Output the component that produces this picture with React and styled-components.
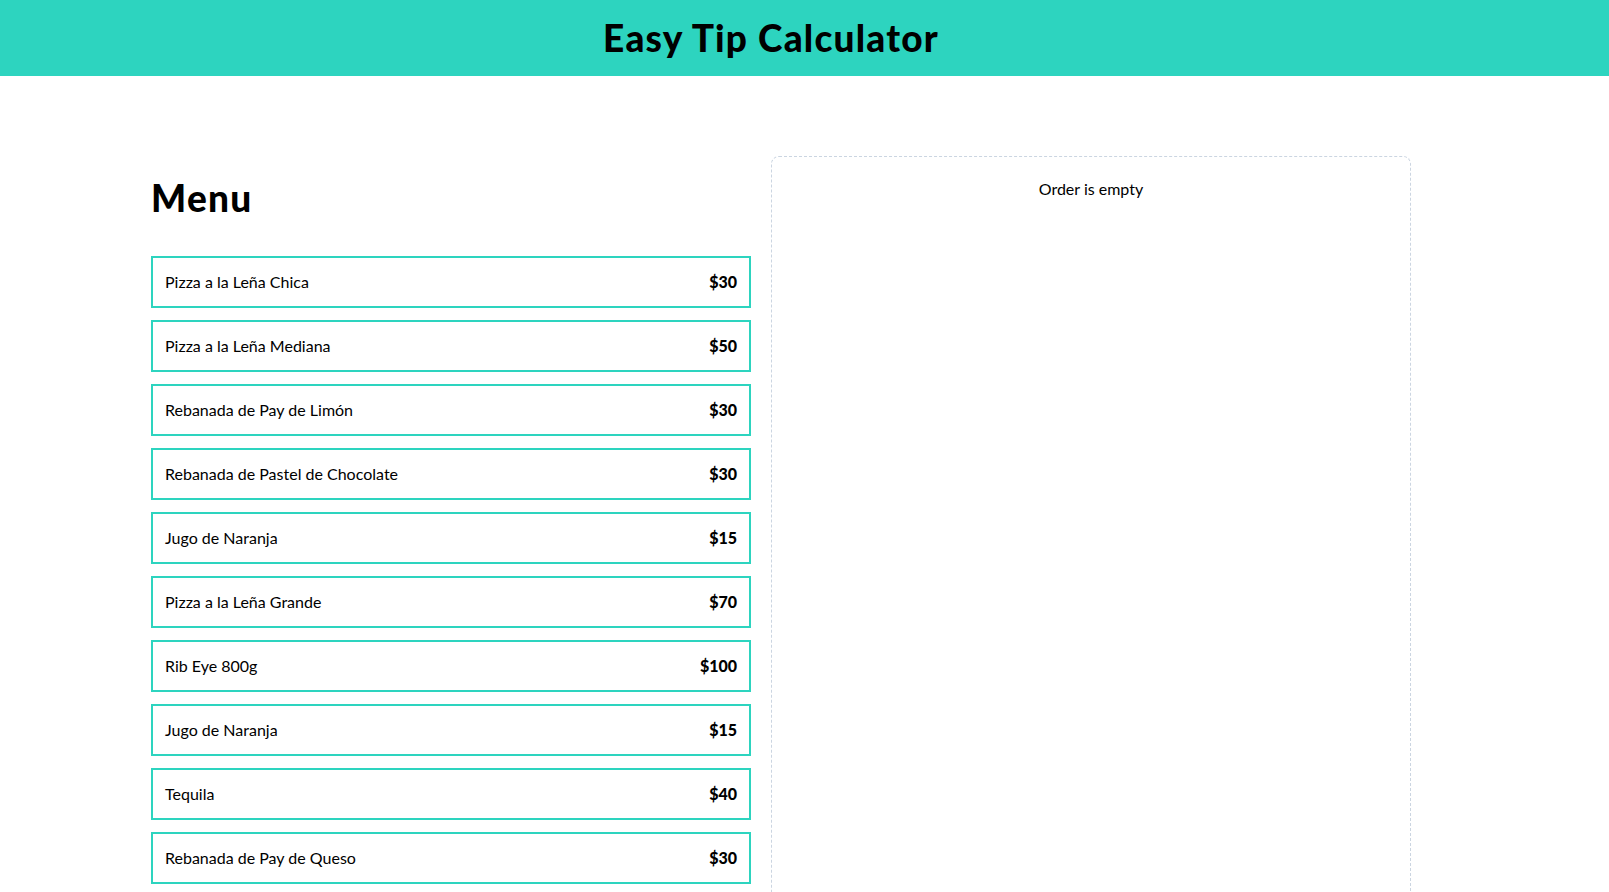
import React from "react";
import styled, { createGlobalStyle } from "styled-components";

const menu = [
  { id: 1, name: "Pizza a la Leña Chica", price: 30 },
  { id: 2, name: "Pizza a la Leña Mediana", price: 50 },
  { id: 3, name: "Rebanada de Pay de Limón", price: 30 },
  { id: 4, name: "Rebanada de Pastel de Chocolate", price: 30 },
  { id: 5, name: "Jugo de Naranja", price: 15 },
  { id: 6, name: "Pizza a la Leña Grande", price: 70 },
  { id: 7, name: "Rib Eye 800g", price: 100 },
  { id: 8, name: "Jugo de Naranja", price: 15 },
  { id: 9, name: "Tequila", price: 40 },
  { id: 10, name: "Rebanada de Pay de Queso", price: 30 },
];

const App = () => {
  return (
    <>
      <GlobalStyle />
      <Header>
        <HeaderInner>
          <Title>Easy Tip Calculator</Title>
        </HeaderInner>
      </Header>
      <Page>
        <Main>
          <MenuColumn>
            <Heading>Menu</Heading>
            <ItemList>
              {menu.map((item) => (
                <MenuItem key={item.id}>
                  <ItemName>{item.name}</ItemName>
                  <ItemPrice>${item.price}</ItemPrice>
                </MenuItem>
              ))}
            </ItemList>
          </MenuColumn>
          <OrderBox>
            <EmptyText>Order is empty</EmptyText>
          </OrderBox>
        </Main>
      </Page>
    </>
  );
};

export default App;

const GlobalStyle = createGlobalStyle`
  * {
    box-sizing: border-box;
  }
  body {
    margin: 0;
    font-family: "Segoe UI", Lato, "Open Sans", sans-serif;
    color: #000;
    background: #fff;
  }
`;

const Header = styled.header`
  background-color: #2dd4bf;
  height: 76px;
`;

const HeaderInner = styled.div`
  width: 1542px;
  height: 100%;
  display: flex;
  align-items: center;
  justify-content: center;
`;

const Title = styled.h1`
  margin: 0;
  font-size: 37px;
  line-height: 40px;
  font-weight: 900;
  letter-spacing: 1.2px;
`;

const Page = styled.div`
  width: 1542px;
`;

const Main = styled.main`
  width: 1280px;
  margin: 0 auto;
  padding: 80px 0;
  display: grid;
  grid-template-columns: 1fr 1fr;
`;

const MenuColumn = styled.div`
  padding: 20px;
`;

const Heading = styled.h2`
  margin: 2px 0 38px;
  font-size: 37px;
  line-height: 40px;
  font-weight: 900;
  letter-spacing: 1.3px;
`;

const ItemList = styled.div`
  display: flex;
  flex-direction: column;
  gap: 12px;
`;

const MenuItem = styled.button`
  display: flex;
  justify-content: space-between;
  align-items: center;
  width: 100%;
  height: 52px;
  padding: 0 12px 1px;
  border: 2px solid #2dd4bf;
  background: #fff;
  font-family: inherit;
  font-size: 16px;
  color: #000;
  cursor: pointer;
  &:hover {
    background: #ccfbf1;
  }
`;

const ItemName = styled.span`
  font-weight: 400;
`;

const ItemPrice = styled.span`
  font-weight: 900;
`;

const OrderBox = styled.section`
  border: 1px dashed #cbd5e1;
  border-radius: 8px;
  padding: 20px;
`;

const EmptyText = styled.p`
  margin: 0;
  text-align: center;
  font-size: 16px;
  line-height: 24px;
`;
